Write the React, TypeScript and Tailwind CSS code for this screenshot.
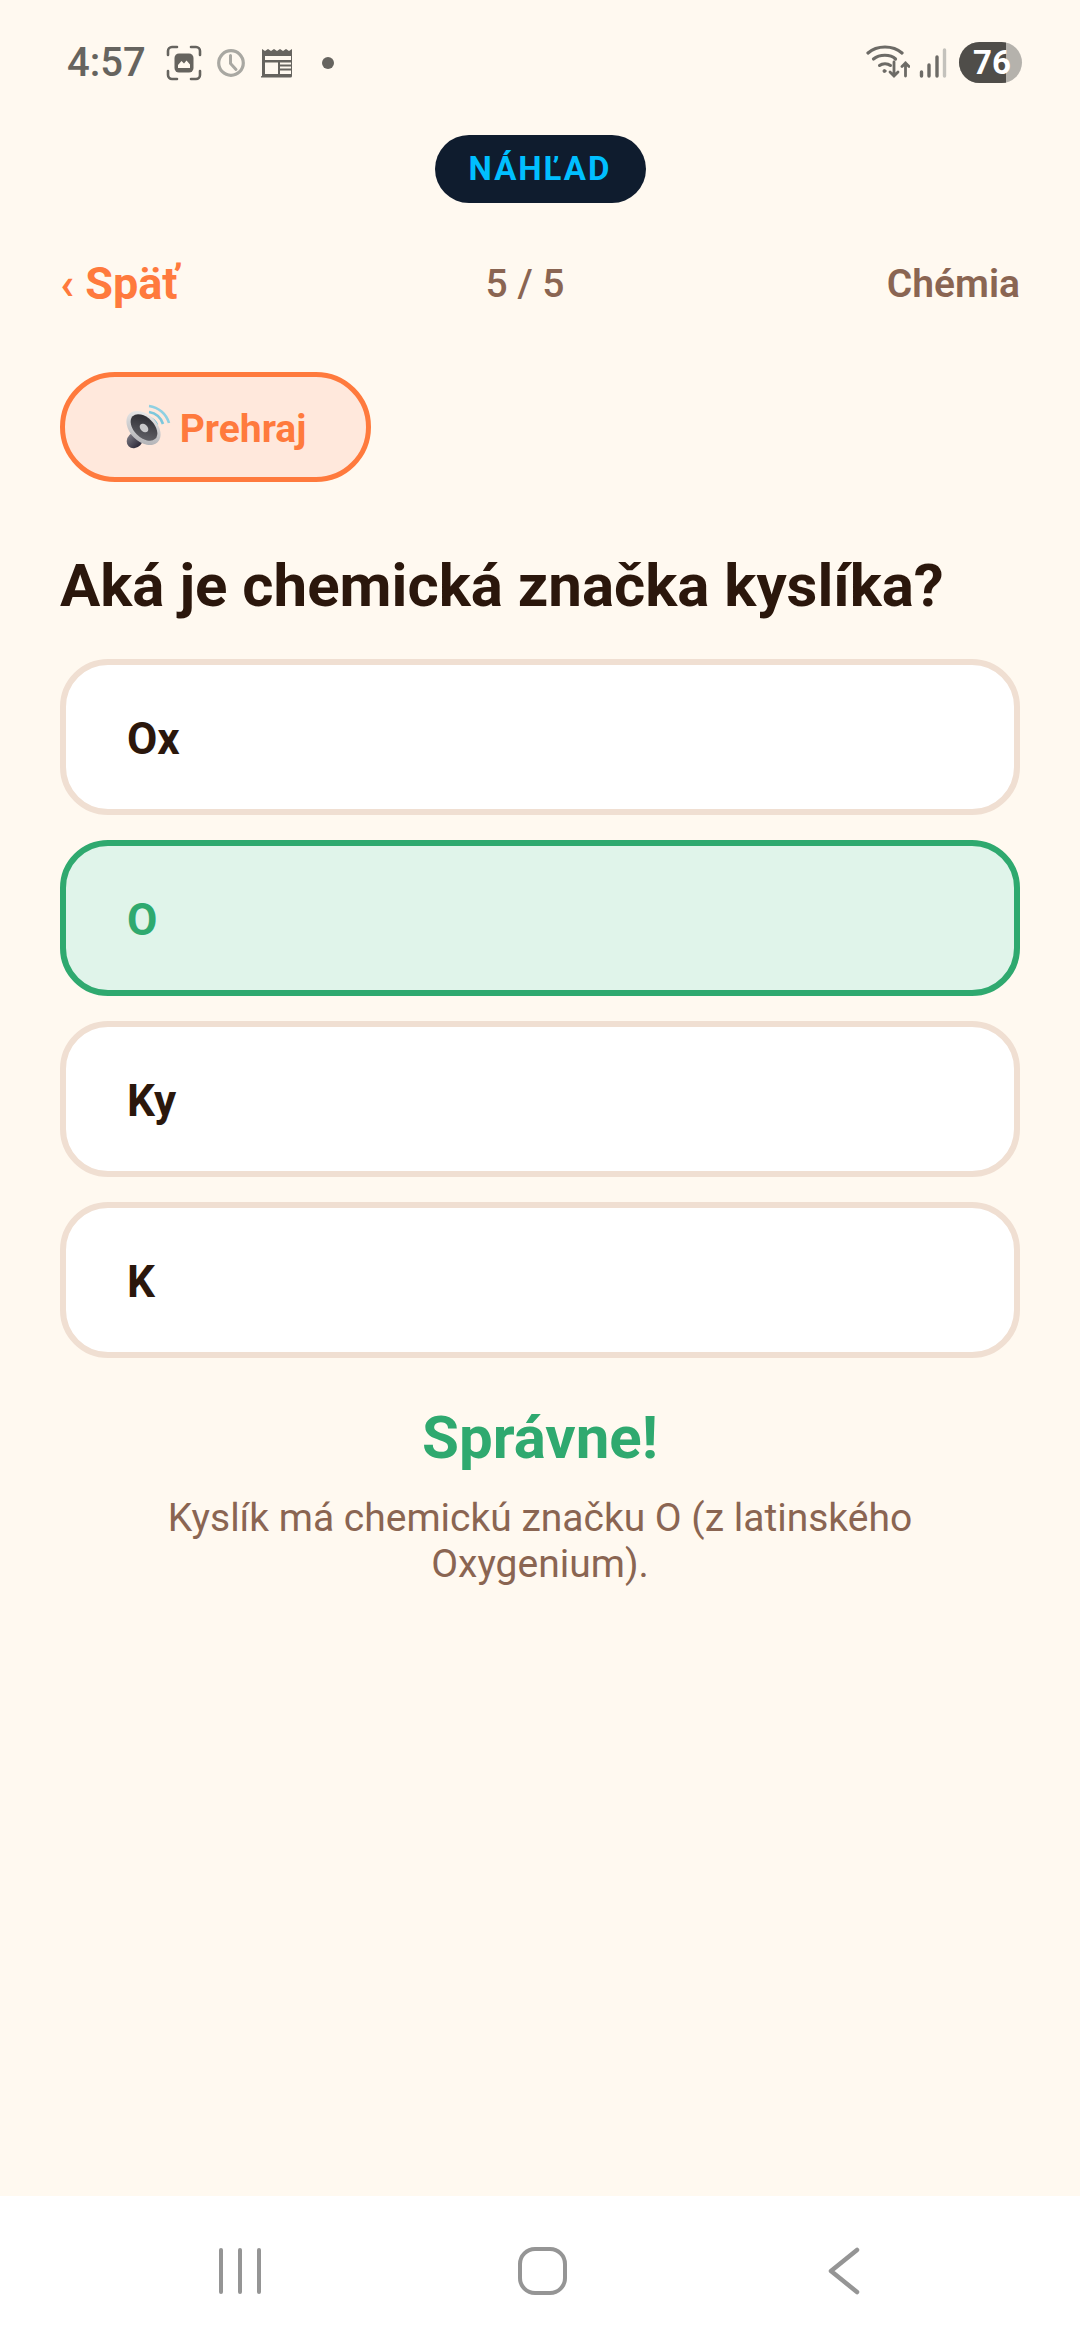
const OPTIONS = [
  { label: 'Ox', correct: false },
  { label: 'O', correct: true },
  { label: 'Ky', correct: false },
  { label: 'K', correct: false },
];

function ScreenshotIcon() {
  return (
    <svg width="36" height="36" viewBox="0 0 36 36" fill="none">
      <path
        d="M2 10V6a4 4 0 0 1 4-4h5M25 2h5a4 4 0 0 1 4 4v4M34 26v4a4 4 0 0 1-4 4h-5M11 34H6a4 4 0 0 1-4-4v-4"
        stroke="#66645f"
        strokeWidth="2.6"
        strokeLinecap="round"
      />
      <rect x="8.500" y="8.500" width="19" height="19" rx="4.500" fill="#66645f" />
      <path d="M12 23v-3l3.500-4 2.500 2.500 2.500-3 3.500 4V23z" fill="#fff9f0" />
    </svg>
  );
}

function ClockIcon() {
  return (
    <svg width="30" height="30" viewBox="0 0 30 30" fill="none">
      <circle cx="15" cy="15" r="12.3" stroke="#a9a8a2" strokeWidth="3.2" />
      <path d="M14.500 7.500v8l5.500 6" stroke="#a9a8a2" strokeWidth="3" strokeLinecap="round" />
    </svg>
  );
}

function NewsIcon() {
  return (
    <svg width="34" height="30" viewBox="0 0 34 30">
      <path
        d="M1 1l3 2 3-2 3 2 3-2 3 2 3-2 3 2 3-2 3 2 3-2v27a1.500 1.500 0 0 1-1.500 1.500h-30A1.500 1.500 0 0 1 1 28z"
        fill="#66645f"
      />
      <path
        d="M4 8h26v4H4zM4 14.500h13V26H4zM19 14.500h11v2H19zM19 18.500h11v2H19zM19 22.500h11V26H19z"
        fill="#fff9f0"
      />
    </svg>
  );
}

function WifiIcon() {
  return (
    <svg width="44" height="36" viewBox="0 0 44 36" fill="none" stroke="#6d6b66" strokeLinecap="round">
      <path d="M2 8C11 0 27 0 36 8" strokeWidth="3.200" />
      <path d="M7.500 14c6-5 17-5 22 0" strokeWidth="3.200" />
      <path d="M13.500 20.500c3-2.500 8-2.500 11 0" strokeWidth="3" />
      <circle cx="18.500" cy="26" r="1.500" fill="#6d6b66" strokeWidth="1" />
      <path d="M28 17v14M24 27l4 4 4-4" strokeWidth="2.800" />
      <path d="M39.500 31V18M36 21.500l3.500-3.500 3.500 3.500" strokeWidth="2.800" />
    </svg>
  );
}

function SignalIcon() {
  return (
    <svg width="28" height="30" viewBox="0 0 28 30" fill="none" strokeWidth="3.400" strokeLinecap="round">
      <path d="M2.500 24v4" stroke="#6d6b66" />
      <path d="M10 17v11" stroke="#6d6b66" />
      <path d="M18 9v19" stroke="#6d6b66" />
      <path d="M25.500 2v26" stroke="#c4c2bc" />
    </svg>
  );
}

function SpeakerEmoji() {
  return (
    <svg width="48" height="48" viewBox="0 0 48 48" fill="none">
      <defs>
        <linearGradient id="rim" x1="0" y1="0" x2="1" y2="1">
          <stop offset="0" stopColor="#f2f2f2" />
          <stop offset="1" stopColor="#a9a9ad" />
        </linearGradient>
        <linearGradient id="cone" x1="0" y1="0" x2="1" y2="1">
          <stop offset="0" stopColor="#24242a" />
          <stop offset="1" stopColor="#6a6a70" />
        </linearGradient>
        <linearGradient id="magnet" x1="0" y1="0" x2="0" y2="1">
          <stop offset="0" stopColor="#77757f" />
          <stop offset="1" stopColor="#2c2838" />
        </linearGradient>
      </defs>
      <path d="M24 3A24 24 0 0 1 44 20" stroke="#8fd0e2" strokeWidth="2.600" />
      <path d="M24 9A18 18 0 0 1 38 21" stroke="#7cc7dc" strokeWidth="2.600" />
      <path d="M24 15A12 12 0 0 1 32 22" stroke="#6cbfd6" strokeWidth="2.600" />
      <ellipse cx="10" cy="37" rx="9" ry="7.500" transform="rotate(-45 10 37)" fill="url(#magnet)" />
      <ellipse cx="18.500" cy="25" rx="20" ry="13.500" transform="rotate(45 18.500 25)" fill="url(#rim)" />
      <ellipse cx="19" cy="24.500" rx="16" ry="10" transform="rotate(45 19 24.500)" fill="url(#cone)" />
      <ellipse cx="19" cy="25" rx="5" ry="3.500" transform="rotate(45 19 25)" fill="#c9c9cb" />
    </svg>
  );
}

function StatusBar() {
  return (
    <div className="flex items-center pl-[67px] pr-[58px] h-[125px] text-[#66645f]">
      <span className="text-[40px] font-medium leading-none mr-[20px]">4:57</span>
      <div className="mr-[14px] flex"><ScreenshotIcon /></div>
      <div className="mr-[15px] flex"><ClockIcon /></div>
      <div className="mr-[27px] flex"><NewsIcon /></div>
      <div className="w-[12px] h-[12px] rounded-full bg-[#66645f]" />
      <div className="ml-auto flex items-center gap-[9px]">
        <WifiIcon />
        <SignalIcon />
        <div className="relative ml-[3px] w-[63px] h-[41px] rounded-full overflow-hidden bg-[#b5b2ac] flex">
          <div className="w-[47px] h-full bg-[#4f4d49]" />
          <span className="absolute left-[14px] top-0 h-full flex items-center text-[33px] font-bold text-white leading-none">
            76
          </span>
        </div>
      </div>
    </div>
  );
}

function NavBar() {
  return (
    <div className="h-[144px] bg-white flex items-center pl-[89px] pt-[6px]">
      <div className="w-[302px] flex justify-center gap-[15px]">
        <div className="w-[4px] h-[46px] rounded-full bg-[#959595]" />
        <div className="w-[4px] h-[46px] rounded-full bg-[#959595]" />
        <div className="w-[4px] h-[46px] rounded-full bg-[#959595]" />
      </div>
      <div className="w-[302px] flex justify-center">
        <div className="w-[49px] h-[48px] rounded-[17px] border-[4px] border-[#959595]" />
      </div>
      <div className="w-[302px] flex justify-center">
        <svg width="34" height="50" viewBox="0 0 34 50" fill="none">
          <path d="M30 4L4 25l26 21" stroke="#959595" strokeWidth="4.500" strokeLinecap="round" strokeLinejoin="round" />
        </svg>
      </div>
    </div>
  );
}

export default function App() {
  return (
    <div className="h-[2340px] w-[1080px] bg-[#fff9f0] flex flex-col font-['Roboto',sans-serif]">
      <div className="flex-1">
        <StatusBar />
        <div className="mt-[10px] flex justify-center">
          <div className="w-[211px] h-[68px] rounded-full bg-[#0f1c2e] flex items-center justify-center text-[33px] font-bold tracking-[2px] text-[#00bfff]">
            NÁHĽAD
          </div>
        </div>

        <div className="px-[60px]">
          <div className="mt-[56px] flex items-center justify-between h-[50px]">
            <span className="text-[45px] font-bold text-[#ff7a3d] w-[240px]">‹ Späť</span>
            <span className="mr-[30px] text-[39px] font-medium text-[#8a6552]">5 / 5</span>
            <span className="text-[39px] font-semibold text-[#8a6552] w-[240px] text-right">Chémia</span>
          </div>

          <div className="mt-[63px] w-[311px] h-[110px] rounded-full border-[5px] border-[#ff7a3d] bg-[#ffe8dc] flex items-center justify-center gap-[7px]">
            <SpeakerEmoji />
            <span className="pt-[5px] text-[39px] font-bold text-[#ff7a3d]">Prehraj</span>
          </div>

          <h1 className="mt-[71px] text-[60px] leading-[66px] font-bold text-[#2b170c]">
            Aká je chemická značka kyslíka?
          </h1>

          <div className="mt-[40px] flex flex-col gap-[25px]">
            {OPTIONS.map((option) => (
              <div
                key={option.label}
                className={
                  option.correct
                    ? 'h-[156px] rounded-[48px] border-[6px] border-[#2fa96f] bg-[#e0f4ea] pl-[61px] pt-[4px] flex items-center text-[44px] font-bold text-[#2fa96f]'
                    : 'h-[156px] rounded-[48px] border-[6px] border-[#f0dfd2] bg-white pl-[61px] pt-[4px] flex items-center text-[44px] font-bold text-[#2b170c]'
                }
              >
                {option.label}
              </div>
            ))}
          </div>

          <div className="mt-[45px] text-center">
            <div className="text-[60px] leading-[70px] font-bold text-[#2fa96f]">Správne!</div>
            <p className="mt-[22px] mx-auto w-[800px] text-[39px] leading-[46px] text-[#8a6552]">
              Kyslík má chemickú značku O (z latinského Oxygenium).
            </p>
          </div>
        </div>
      </div>
      <NavBar />
    </div>
  );
}
